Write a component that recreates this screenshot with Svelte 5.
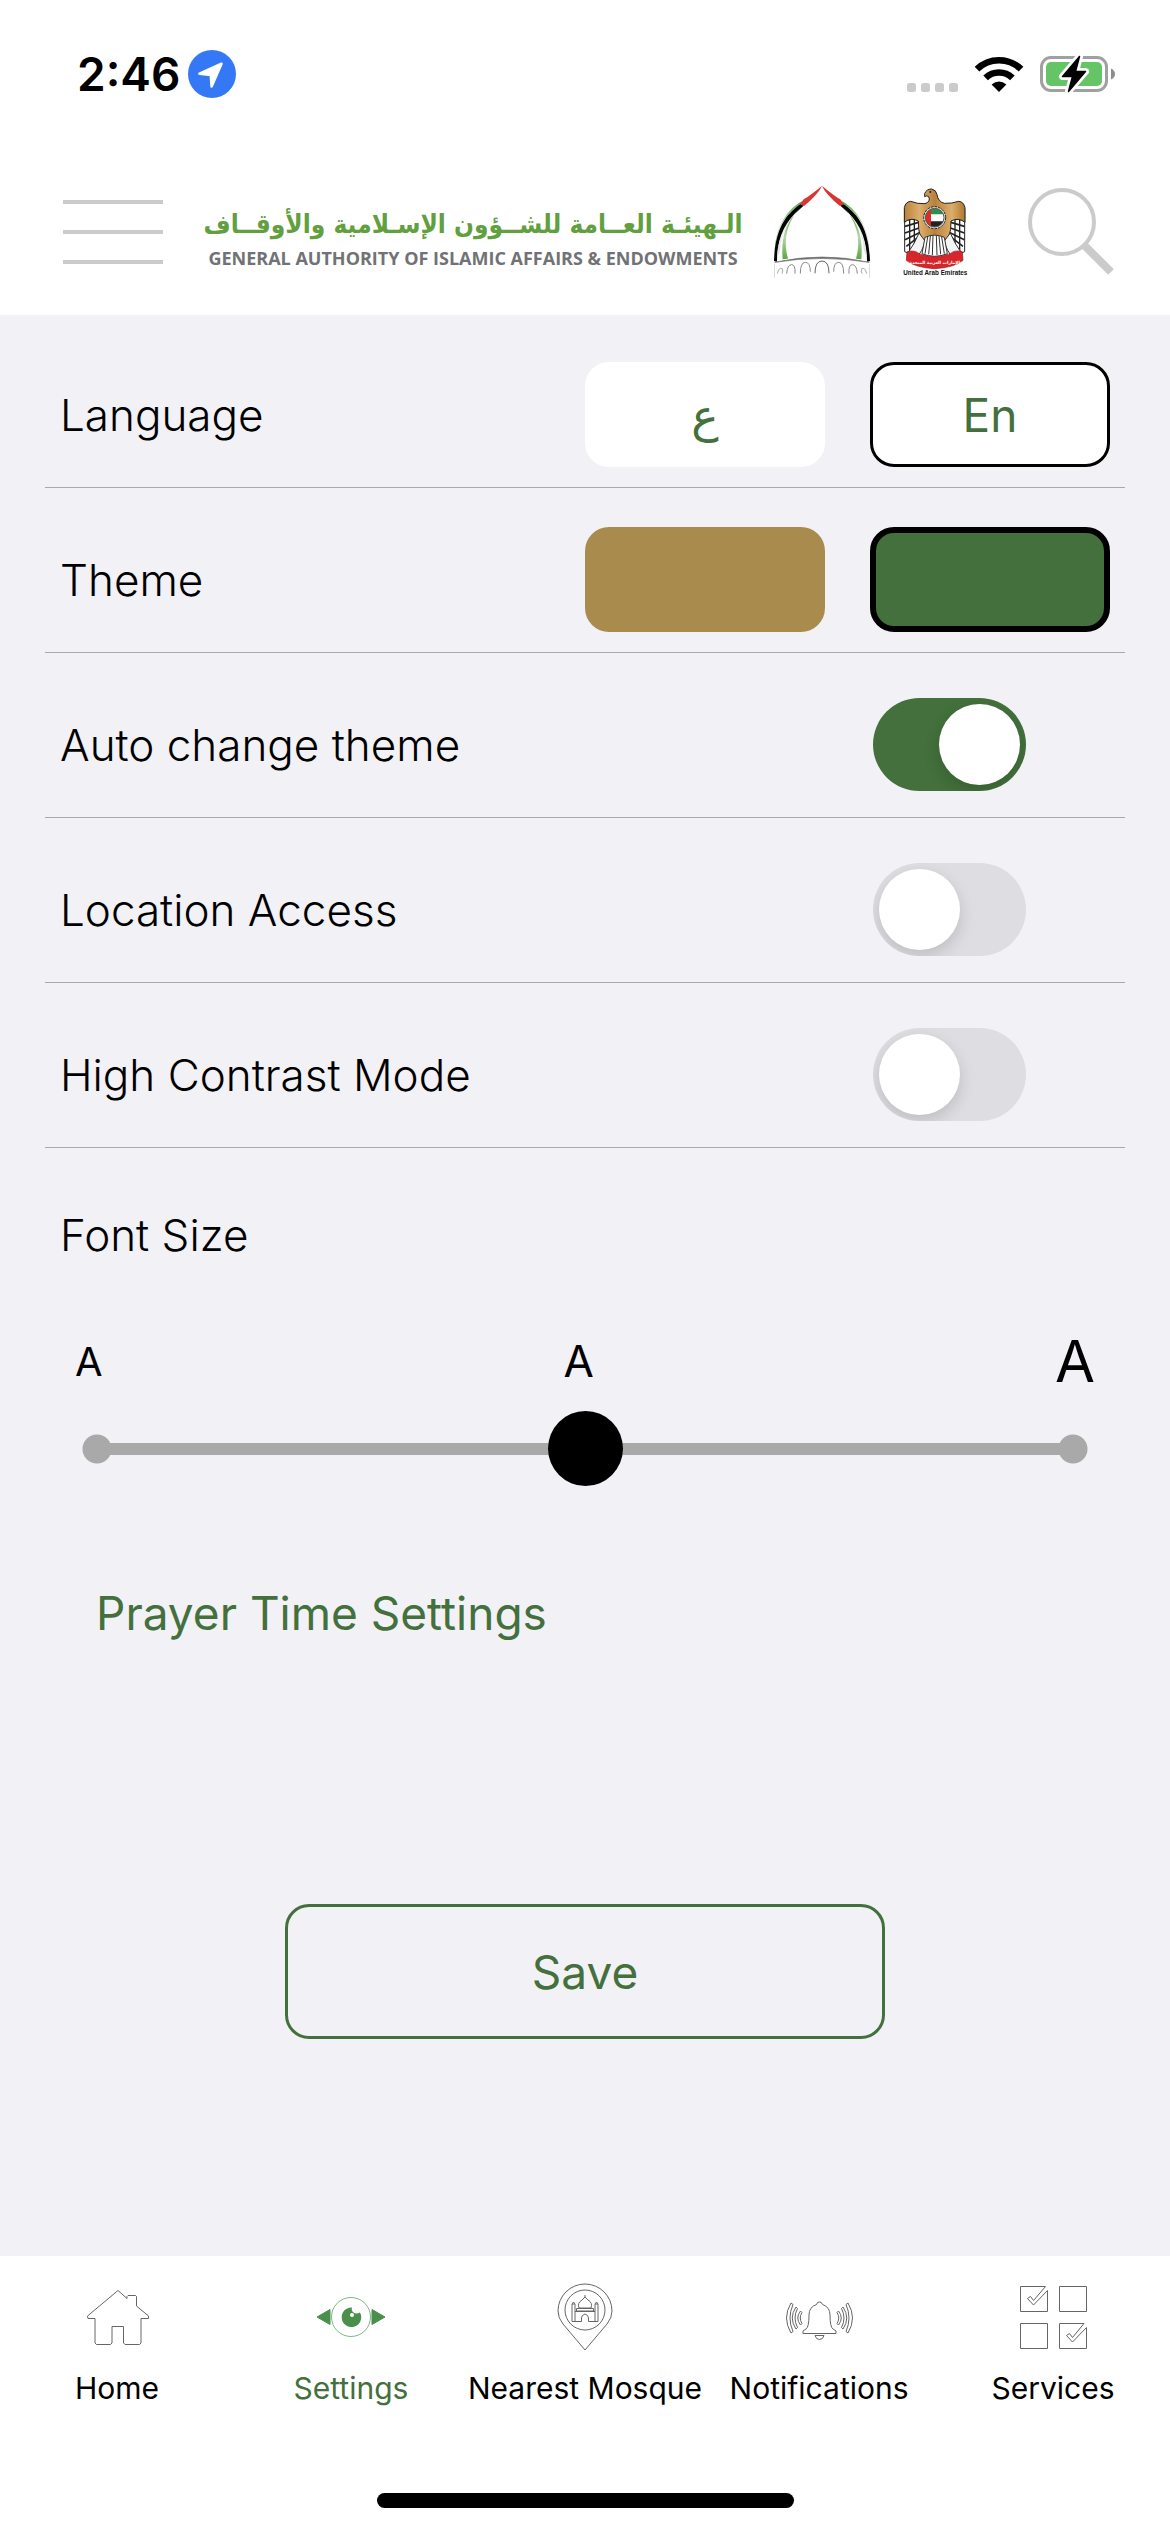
<script>
  let language = $state('en');
  let theme = $state('green');
  let autoTheme = $state(true);
  let location = $state(false);
  let contrast = $state(false);
  let fontSize = $state(1);
</script>

<div class="screen">
  <div class="status">
    <div class="clock">
      <span>2:46</span>
      <svg width="48" height="48" viewBox="0 0 48 48" aria-hidden="true">
        <circle cx="24" cy="24" r="24" fill="#3478f6" />
        <path d="M33.5 13.8 L11.5 23.6 L22.8 25 L23.6 36.5 Z" fill="#fff" stroke="#fff" stroke-width="2.6" stroke-linejoin="round" />
      </svg>
    </div>
    <div class="signals">
      <svg width="51" height="36" viewBox="0 0 51 36" aria-hidden="true">
        <g fill="#cbcbcb">
          <rect x="0" y="27" width="9" height="9" rx="2.5" />
          <rect x="14" y="27" width="9" height="9" rx="2.5" />
          <rect x="28" y="27" width="9" height="9" rx="2.5" />
          <rect x="42" y="27" width="9" height="9" rx="2.5" />
        </g>
      </svg>
      <svg width="50" height="36" viewBox="0 0 50 36" aria-hidden="true">
        <g fill="none" stroke="#000" stroke-width="6.6">
          <path d="M3 13.2 A31.5 31.5 0 0 1 47 13.2" />
          <path d="M11.6 21.8 A19.5 19.5 0 0 1 38.4 21.8" />
        </g>
        <path d="M25 36 L17.6 28.6 Q25 22.6 32.4 28.6 Z" />
      </svg>
      <svg width="76" height="42" viewBox="0 0 76 42" aria-hidden="true">
        <rect x="1.5" y="4.5" width="65" height="33" rx="9.5" fill="none" stroke="#a0a0a0" stroke-width="3" />
        <rect x="6" y="9" width="56" height="24" rx="5" fill="#65c466" />
        <path d="M71 15.5 Q75 17.5 75 21 Q75 24.5 71 26.5 Z" fill="#8e8e8e" />
        <path d="M39.5 3.5 L22.5 23.5 L32.5 23.5 L28.5 38.5 L45.5 18.5 L35.5 18.5 Z" stroke="#fff" stroke-width="7" stroke-linejoin="round" />
        <path d="M39.5 3.5 L22.5 23.5 L32.5 23.5 L28.5 38.5 L45.5 18.5 L35.5 18.5 Z" stroke="#000" stroke-width="1.5" stroke-linejoin="round" />
      </svg>
    </div>
  </div>

  <header>
    <button class="icon-button menu" aria-label="Menu"><i></i><i></i><i></i></button>
    <div class="brand">
      <div class="wordmark">
        <span class="arabic" lang="ar" dir="rtl">الـهيئـة العــامة للشــؤون الإسـلامية والأوقــاف</span>
        <span class="english">GENERAL AUTHORITY OF ISLAMIC AFFAIRS &amp; ENDOWMENTS</span>
      </div>
      <svg width="96" height="95" viewBox="27 15 288 285" aria-hidden="true">
        <defs>
          <linearGradient id="leaf" x1="0" y1="0" x2="0" y2="1">
            <stop offset="0" stop-color="#5aa544" />
            <stop offset=".5" stop-color="#b5d8a8" />
            <stop offset="1" stop-color="#5aa544" />
          </linearGradient>
          <linearGradient id="veil" x1="0" y1="0" x2="0" y2="1">
            <stop offset="0" stop-color="#fff" />
            <stop offset="1" stop-color="#ddd" />
          </linearGradient>
          <g id="half">
            <path d="M112 66 C70 88 32 140 29 215 L34 180 C44 130 75 95 107 75 Z" fill="url(#leaf)" />
            <path d="M108 74 C70 100 30 140 27 246 L36 248 C36 170 70 120 116 80 Z" fill="#050505" />
            <path d="M106 88 C62 128 38 170 36 240 L46 210 C46 170 72 125 106 88 Z" fill="url(#veil)" />
            <path d="M88 107 C60 140 48 180 53 241 L69 239 C56 190 62 150 88 107 Z" fill="url(#leaf)" />
            <path d="M171 20 C150 38 125 56 116 61 L105 76 L117 81 C145 58 163 38 171 20 Z" fill="#d93632" />
          </g>
        </defs>
        <use href="#half" />
        <use href="#half" transform="matrix(-1 0 0 1 342 0)" />
        <path d="M29 250 Q171 218 313 250 Q171 227 29 250 Z" fill="#666" stroke="#777" stroke-width="2" />
        <g fill="none" stroke="#8b8b8b" stroke-width="3">
          <path d="M150 283 Q150 246 171 246 Q192 246 192 283" stroke="#666" />
          <path d="M106 284 Q106 250 121 250 Q136 250 136 278" />
          <path d="M206 278 Q206 250 221 250 Q236 250 236 284" />
          <path d="M65 284 Q67 257 80 257 Q92 257 90 284" />
          <path d="M252 284 Q250 257 262 257 Q275 257 277 284" />
          <path d="M37 284 Q42 263 52 269 Q55 276 51 284" stroke="#aaa" />
          <path d="M291 284 Q287 276 290 269 Q300 263 305 284" stroke="#aaa" />
          <path d="M28 256 V296 M314 256 V296" stroke="#bbb" stroke-width="2" />
        </g>
      </svg>
      <svg width="67" height="90" viewBox="405 22 201 270" role="img" aria-label="United Arab Emirates emblem">
        <defs>
          <linearGradient id="gold" x1="0" y1="0" x2="1" y2="0">
            <stop offset="0" stop-color="#b8833b" />
            <stop offset=".25" stop-color="#dcae6c" />
            <stop offset=".5" stop-color="#b9823a" />
            <stop offset=".78" stop-color="#dcae6c" />
            <stop offset="1" stop-color="#ad772f" />
          </linearGradient>
          <clipPath id="disc"><circle cx="503" cy="114" r="28" /></clipPath>
          <g id="wing">
            <path d="M413 90 L413 216 L427 222 L440 208 L462 180 L468 130 Z" fill="#fff" stroke="#222" stroke-width="3" />
            <path d="M414 122 L456 112 M414 140 L462 126 M414 160 L464 142 M414 180 L460 158 M418 200 L452 174" stroke="#222" stroke-width="5" />
            <path d="M428 110 V214 M442 110 V198" stroke="#222" stroke-width="4" />
          </g>
        </defs>
        <use href="#wing" />
        <use href="#wing" transform="matrix(-1 0 0 1 1006 0)" />
        <path d="M473 42 Q478 28 494 28 Q508 31 510 45 Q513 66 532 71 Q555 72 575 65 Q590 66 594 84 V128 Q574 112 552 124 Q553 152 545 172 L538 188 H468 L461 172 Q453 152 454 124 Q432 112 412 128 V84 Q416 66 431 65 Q450 73 474 72 Q492 66 485 51 Q479 46 473 51 Z" fill="url(#gold)" stroke="#222" stroke-width="3" />
        <circle cx="490" cy="37" r="3" fill="#222" />
        <path d="M456 160 Q444 190 424 218 L446 236 Q468 214 474 184 Z M550 160 Q562 190 582 218 L560 236 Q538 214 532 184 Z" fill="#f4f4f4" stroke="#333" stroke-width="3" />
        <path d="M474 173 Q503 160 532 173 L541 222 Q503 238 465 222 Z" fill="#fff" stroke="#333" stroke-width="3" />
        <path d="M482 172 L474 222 M490 169 L485 224 M498 168 L496 226 M508 168 L510 226 M516 169 L521 224 M524 172 L532 222" stroke="#333" stroke-width="3" />
        <circle cx="503" cy="114" r="33" fill="#ddd" stroke="#222" stroke-width="3" stroke-dasharray="8 3" />
        <g clip-path="url(#disc)">
          <path d="M475 86 h56 v56 h-56 Z" fill="#fff" />
          <path d="M475 84 h56 v20 h-56 Z" fill="#348c4a" />
          <path d="M475 125 h56 v20 h-56 Z" fill="#222" />
          <path d="M474 84 h18 v60 h-18 Z" fill="#df2b2b" />
        </g>
        <circle cx="503" cy="114" r="28" fill="none" stroke="#555" stroke-width="3" />
        <path d="M420 216 Q444 210 456 222 Q503 240 550 222 Q562 210 586 216 L588 242 Q562 264 503 267 Q444 264 418 242 Z" fill="#d7262b" stroke="#8f1a1d" stroke-width="2" />
        <text x="503" y="252" font-family="'DejaVu Sans', sans-serif" font-size="13" font-weight="700" fill="#fff" text-anchor="middle">الإمارات العربية المتحدة</text>
        <text x="505" y="286" font-family="'Liberation Sans', sans-serif" font-size="19" font-weight="700" fill="#111" text-anchor="middle">United Arab Emirates</text>
      </svg>
    </div>
    <button class="icon-button" aria-label="Search">
      <svg width="86" height="90" viewBox="0 0 86 90">
        <circle cx="34" cy="35" r="32" fill="none" stroke="#cbcbcb" stroke-width="4" />
        <path d="M56 58 L83 85" stroke="#cbcbcb" stroke-width="8" />
      </svg>
    </button>
  </header>

  <main>
    <div class="row">
      <span class="label">Language</span>
      <div class="options">
        <button class="choice" class:selected={language === 'ar'} lang="ar" onclick={() => (language = 'ar')}>ع</button>
        <button class="choice" class:selected={language === 'en'} onclick={() => (language = 'en')}>En</button>
      </div>
    </div>
    <div class="row">
      <span class="label">Theme</span>
      <div class="options">
        <button class="choice swatch gold" class:selected={theme === 'gold'} aria-label="Gold theme" onclick={() => (theme = 'gold')}></button>
        <button class="choice swatch green" class:selected={theme === 'green'} aria-label="Green theme" onclick={() => (theme = 'green')}></button>
      </div>
    </div>
    <div class="row">
      <label class="label" for="auto">Auto change theme</label>
      <input class="toggle" id="auto" type="checkbox" role="switch" bind:checked={autoTheme} />
    </div>
    <div class="row">
      <label class="label" for="location">Location Access</label>
      <input class="toggle" id="location" type="checkbox" role="switch" bind:checked={location} />
    </div>
    <div class="row">
      <label class="label" for="contrast">High Contrast Mode</label>
      <input class="toggle" id="contrast" type="checkbox" role="switch" bind:checked={contrast} />
    </div>

    <div class="sizes">
      <label class="label" for="size">Font Size</label>
      <div class="letters" aria-hidden="true">
        <span class="small">A</span>
        <span class="medium">A</span>
        <span class="large">A</span>
      </div>
      <input class="slider" id="size" type="range" min="0" max="2" step="1" bind:value={fontSize} />
    </div>

    <a class="prayer" href="#prayer">Prayer Time Settings</a>
    <button class="save">Save</button>
  </main>

  <nav>
    <div class="tabs">
      <a href="#home">
        <svg viewBox="0 0 72 72" aria-hidden="true">
          <path d="M37 9.5 L46 17.5 V15.5 L47 14.5 H54.5 L55.5 15.5 V25 L67.5 35 V37.5 H60 V62 L58.5 63.5 H44 L42.5 62 V45.5 H31 V62 L29.5 63.5 H15.5 L14 62 V37.5 H7 L6.5 35 Z" />
        </svg>
        Home
      </a>
      <a href="#settings" class="active" aria-current="page">
        <svg viewBox="0 0 72 72" aria-hidden="true">
          <circle cx="36" cy="36" r="19.5" stroke="#7fb880" />
          <path d="M2 36 L15 28.5 V43.5 Z M70 36 L57 28.5 V43.5 Z" fill="#4a8f4c" stroke="#4a8f4c" />
          <path d="M37 26.5 A9.8 9.8 0 1 0 45 31.5 Q41.5 33.5 38.5 31.5 Q36 29.5 37 26.5 Z" fill="#4a8f4c" stroke="none" />
          <circle cx="37" cy="34" r="2" fill="#fff" stroke="none" />
        </svg>
        Settings
      </a>
      <a href="#mosque">
        <svg viewBox="0 0 72 72" aria-hidden="true">
          <path d="M36 69 L14 43 Q9 37 9 30 A27 27 0 0 1 63 30 Q63 37 58 43 Z" />
          <circle cx="36" cy="29" r="20" />
          <path d="M30 27 Q28 22 33 19 L36 16 L39 19 Q44 22 42 27 Z M36 16 V14 M27.5 27.5 H44.5 V30 H27.5 Z M23 23 H26 V40.5 H23 Z M46 23 H49 V40.5 H46 Z M23 23 L24.5 21 L26 23 M46 23 L47.5 21 L49 23 M26 30.5 H46 M26 40.5 H32.5 V37 Q32.5 34 36 33 Q39.5 34 39.5 37 V40.5 H46" />
        </svg>
        Nearest Mosque
      </a>
      <a href="#notifications">
        <svg viewBox="0 0 72 72" aria-hidden="true">
          <path d="M36.5 21 Q39 21 39.5 23.5 Q47 26 47 34 Q47 46 50 48 L53 50 V52.5 H20 V50 L23 48 Q26 46 26 34 Q26 26 33.5 23.5 Q34 21 36.5 21 Z M32 54.5 H41 Q40 58.5 36.5 58.5 Q33 58.5 32 54.5 Z" />
          <g id="waves">
            <path d="M8 22 L10 23.5 Q4 37 10 50.5 L8 52 Q-1 37 8 22 Z M13 26 L14.5 27.5 Q9.5 37 14.5 46.5 L13 48 Q5.5 37 13 26 Z M17.5 30 L19 31.5 Q15.5 37 19 42.5 L17.5 44 Q12 37 17.5 30 Z" />
          </g>
          <use href="#waves" transform="matrix(-1 0 0 1 73 0)" />
        </svg>
        Notifications
      </a>
      <a href="#services">
        <svg viewBox="0 0 72 72" aria-hidden="true">
          <path d="M28.5 5.5 H3.5 V30.5 H30.5 V12 M42.5 5.5 H69.5 V30.5 H42.5 Z M3.5 42.5 H30.5 V67.5 H3.5 Z M67 42.5 H42.5 V67.5 H69.5 V49 M28.5 5.5 L16.5 19.5 L13.5 15.5 L10.5 17.5 L16.5 24 L30.5 9.5 V12 M67 42.5 L55.5 56.5 L52.5 52.5 L49.5 54.5 L55.5 61 L69.5 46.5 V49" />
        </svg>
        Services
      </a>
    </div>
    <div class="indicator"></div>
  </nav>
</div>

<style>
  :global(body) {
    margin: 0;
    background: #fff;
  }
  .screen {
    --green: #43703c;
    --gray: #a9a9a9;
    display: flex;
    flex-direction: column;
    min-height: 100vh;
    font-family: Inter, 'Noto Sans', 'DejaVu Sans', sans-serif;
    color: #000;
    background: #fff;
  }
  button,
  input {
    margin: 0;
    font: inherit;
    appearance: none;
  }
  button {
    padding: 0;
    border: 0;
    background: none;
  }
  a {
    text-decoration: none;
    color: inherit;
  }

  .status {
    display: flex;
    justify-content: space-between;
    align-items: center;
    height: 148px;
    padding: 0 54px 0 77px;
  }
  .clock,
  .signals {
    display: flex;
    align-items: center;
  }
  .clock {
    gap: 8px;
    font-size: 46px;
    font-weight: 600;
    line-height: 48px;
  }
  .signals {
    gap: 16px;
  }

  header {
    display: flex;
    align-items: center;
    gap: 41px;
    height: 167px;
    padding: 0 56px 0 63px;
  }
  .icon-button {
    display: flex;
    flex: none;
  }
  .menu {
    flex-direction: column;
    gap: 26px;
    width: 100px;
  }
  .menu i {
    height: 4px;
    background: #cbcbcb;
  }
  .brand {
    display: flex;
    align-items: center;
    gap: 32px;
    margin-right: auto;
  }
  .wordmark {
    display: flex;
    flex-direction: column;
    align-items: center;
    width: 538px;
    padding-top: 8px;
    white-space: nowrap;
  }
  .arabic {
    font-family: 'DejaVu Sans Condensed', 'DejaVu Sans', sans-serif;
    font-size: 26px;
    font-weight: 700;
    line-height: 44px;
    color: #629f3e;
  }
  .english {
    font-family: 'Open Sans', 'Noto Sans', sans-serif;
    font-size: 18px;
    font-weight: 700;
    line-height: 24px;
    color: #717275;
  }

  main {
    display: flex;
    flex: 1;
    flex-direction: column;
    padding: 8px 45px 60px;
    background: #f2f1f6;
  }
  .row {
    display: flex;
    align-items: center;
    justify-content: space-between;
    height: 105px;
    padding: 39px 15px 20px;
    border-bottom: 1px solid var(--gray);
  }
  .label {
    font-size: 44px;
    font-weight: 300;
    line-height: 54px;
  }
  .options {
    display: flex;
    gap: 45px;
  }
  .choice {
    width: 240px;
    height: 105px;
    border-radius: 24px;
    background: #fff;
    color: var(--green);
    font-size: 46px;
  }
  .choice.selected {
    border: 3px solid #000;
  }
  .swatch.selected {
    border-width: 6px;
  }
  .gold {
    background: #a98c4d;
  }
  .green {
    background: var(--green);
  }
  .toggle {
    display: flex;
    box-sizing: border-box;
    width: 153px;
    height: 93px;
    margin-right: 84px;
    padding: 6px;
    border-radius: 47px;
    overflow: hidden;
    background: #dedde2;
  }
  .toggle::before {
    content: '';
    width: 81px;
    height: 81px;
    border-radius: 50%;
    background: #fff;
    box-shadow: 0 6px 16px rgb(0 0 0 / 15%);
  }
  .toggle:checked {
    justify-content: flex-end;
    background: var(--green);
  }

  .sizes {
    display: flex;
    flex-direction: column;
    margin-top: 60px;
    padding: 0 15px;
  }
  .letters {
    display: flex;
    align-items: center;
    justify-content: space-between;
    height: 72px;
    margin: 63px 15px 14px;
  }
  .small {
    font-size: 40px;
  }
  .medium {
    font-size: 44px;
  }
  .large {
    font-size: 58px;
  }
  .slider {
    width: 100%;
    height: 75px;
    background:
      radial-gradient(circle, var(--gray) 14px, transparent 15px) 22px center / 30px 30px no-repeat,
      radial-gradient(circle, var(--gray) 14px, transparent 15px) right 22px center / 30px 30px no-repeat,
      linear-gradient(var(--gray), var(--gray)) center / calc(100% - 75px) 12px no-repeat;
  }
  .slider::-webkit-slider-thumb {
    appearance: none;
    width: 75px;
    height: 75px;
    border-radius: 50%;
    background: #000;
  }
  .prayer {
    align-self: flex-start;
    margin: 97px 0 0 51px;
    font-size: 46px;
    line-height: 60px;
    color: var(--green);
  }
  .save {
    align-self: center;
    width: 600px;
    height: 135px;
    margin-top: 261px;
    border: 3px solid var(--green);
    border-radius: 24px;
    font-size: 46px;
    color: var(--green);
  }

  nav {
    padding-top: 25px;
  }
  .tabs {
    display: grid;
    grid-template-columns: repeat(5, 1fr);
    font-size: 30px;
    line-height: 36px;
  }
  .tabs a {
    display: flex;
    flex-direction: column;
    align-items: center;
    gap: 17px;
    white-space: nowrap;
  }
  .tabs svg {
    width: 72px;
    height: 72px;
    fill: none;
    stroke: #666;
    stroke-width: 1;
  }
  .tabs .active {
    color: var(--green);
  }
  .indicator {
    width: 417px;
    height: 15px;
    margin: 87px auto 24px;
    border-radius: 8px;
    background: #000;
  }
</style>
